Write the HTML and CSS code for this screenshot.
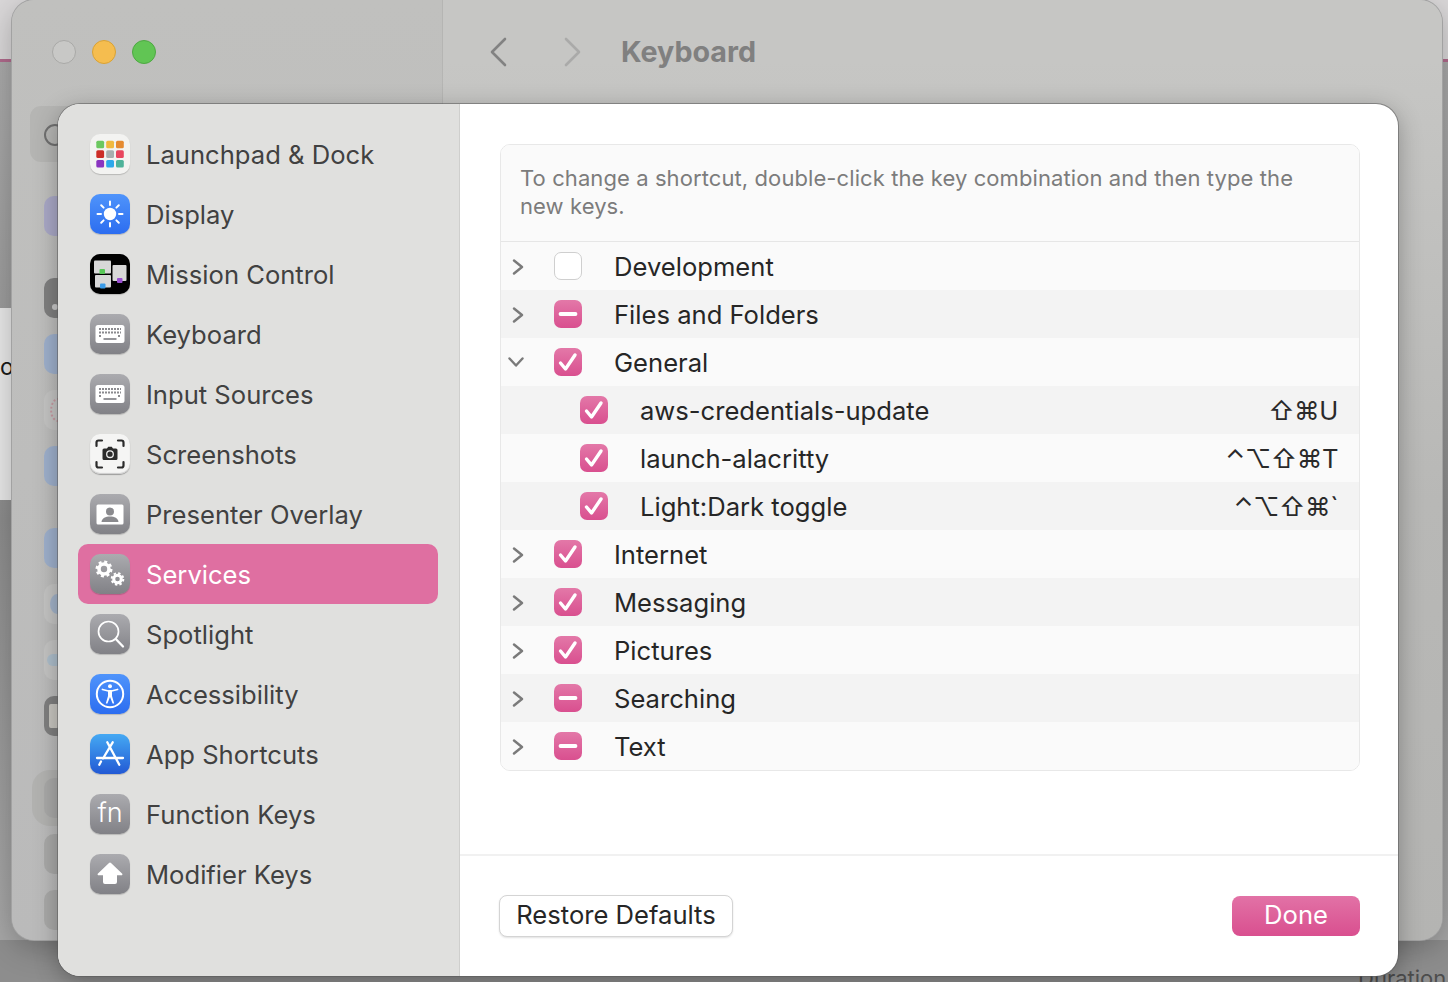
FILE: index.html
```html
<!DOCTYPE html>
<html lang="en">
<head>
<meta charset="utf-8">
<title>Keyboard</title>
<link rel="stylesheet" href="styles.css">
</head>
<body>
<div class="desktop">
  <div class="backdrop">
    <div class="bd-top"></div>
    <div class="bd-line"></div>
    <div class="bd-upper"></div>
    <div class="bd-panel"><span class="bd-letter">o</span></div>
    <div class="bd-lower"></div>
    <div class="bd-foot"><span class="bd-duration">Duration</span></div>
  </div>

  <div class="window">
    <aside class="win-side">
      <div class="lights">
        <span class="light light-off"></span>
        <span class="light light-min"></span>
        <span class="light light-max"></span>
      </div>
      <div class="search"><span class="search-ring"></span></div>
      <div class="ghost-group">
        <div class="ghost g-purple"></div>
      </div>
      <div class="ghost-group">
        <div class="ghost g-dark"><span class="g-dot"></span></div>
        <div class="ghost g-blue"></div>
        <div class="ghost g-white"><span class="g-print"></span></div>
        <div class="ghost g-blue"></div>
      </div>
      <div class="ghost-group">
        <div class="ghost g-blue"></div>
        <div class="ghost g-white"><span class="g-blob"></span></div>
        <div class="ghost g-white"><span class="g-cloud"></span></div>
        <div class="ghost g-dark"><span class="g-card"></span></div>
      </div>
      <div class="ghost-group">
        <div class="ghost g-grey g-selected"></div>
        <div class="ghost g-grey"></div>
        <div class="ghost g-grey"></div>
      </div>
    </aside>
    <div class="win-main">
      <div class="toolbar">
        <svg class="nav nav-back" viewBox="0 0 20 32"><path d="M17 3 4 16l13 13" /></svg>
        <svg class="nav nav-fwd" viewBox="0 0 20 32"><path d="M3 3l13 13L3 29" /></svg>
        <span class="win-title">Keyboard</span>
      </div>
    </div>
  </div>

  <div class="dialog">
    <nav class="nav-list">
      <div class="nav-row">
        <span class="tile t-white">
          <svg viewBox="0 0 40 40">
            <rect x="6.3" y="6.7" width="7.8" height="7.6" rx="1.5" fill="#6cc860"/>
            <rect x="16.2" y="6.7" width="7.8" height="7.6" rx="1.5" fill="#f0b93f"/>
            <rect x="26" y="6.7" width="7.8" height="7.6" rx="1.5" fill="#e58a30"/>
            <rect x="6.3" y="16.3" width="7.8" height="7.6" rx="1.5" fill="#cc2d26"/>
            <rect x="16.2" y="16.3" width="7.8" height="7.6" rx="1.5" fill="#a8aeae"/>
            <rect x="26" y="16.3" width="7.8" height="7.6" rx="1.5" fill="#e8465e"/>
            <rect x="6.3" y="26" width="7.8" height="7.6" rx="1.5" fill="#8a35c0"/>
            <rect x="16.2" y="26" width="7.8" height="7.6" rx="1.5" fill="#2da8ea"/>
            <rect x="26" y="26" width="7.8" height="7.6" rx="1.5" fill="#4fb39a"/>
          </svg>
        </span>
        <span class="nav-label">Launchpad &amp; Dock</span>
      </div>
      <div class="nav-row">
        <span class="tile t-blue">
          <svg viewBox="0 0 40 40">
            <circle cx="20" cy="20" r="6.2" fill="#fff"/>
            <g stroke="#fff" stroke-width="2" stroke-linecap="round">
              <path d="M20 7.5v3.5M20 29v3.5M7.5 20H11M29 20h3.5M11.2 11.2l2.4 2.4M26.4 26.4l2.4 2.4M28.8 11.2l-2.4 2.4M13.6 26.4l-2.4 2.4"/>
            </g>
          </svg>
        </span>
        <span class="nav-label">Display</span>
      </div>
      <div class="nav-row">
        <span class="tile t-black">
          <svg viewBox="0 0 40 40">
            <rect x="4" y="6.5" width="17" height="13" rx="1" fill="#d8d8d8"/>
            <rect x="5" y="21" width="16" height="12.5" rx="1" fill="#d8d8d8"/>
            <rect x="22.5" y="11" width="14" height="16" rx="1" fill="#d8d8d8"/>
            <rect x="9.5" y="15" width="5.5" height="5" rx="1" fill="#58c858"/>
            <rect x="10" y="29.5" width="5.5" height="5" rx="1" fill="#3a9be8"/>
            <rect x="27" y="24" width="5.5" height="5" rx="1" fill="#9a4fd0"/>
          </svg>
        </span>
        <span class="nav-label">Mission Control</span>
      </div>
      <div class="nav-row">
        <span class="tile t-grey">
          <svg viewBox="0 0 40 40">
            <rect x="5.5" y="11" width="29" height="18" rx="2.5" fill="#fff"/>
            <path class="keys" d="M9 15h22M9 18.5h22M9 22h3M28 22h3"/>
            <path class="space" d="M13.5 25h13"/>
          </svg>
        </span>
        <span class="nav-label">Keyboard</span>
      </div>
      <div class="nav-row">
        <span class="tile t-grey">
          <svg viewBox="0 0 40 40">
            <rect x="5.5" y="11" width="29" height="18" rx="2.5" fill="#fff"/>
            <path class="keys" d="M9 15h22M9 18.5h22M9 22h3M28 22h3"/>
            <path class="space" d="M13.5 25h13"/>
          </svg>
        </span>
        <span class="nav-label">Input Sources</span>
      </div>
      <div class="nav-row">
        <span class="tile t-shot">
          <svg viewBox="0 0 40 40">
            <path class="bracket" d="M6.5 12V8.5a2 2 0 0 1 2-2H12M28 6.5h3.5a2 2 0 0 1 2 2V12M33.5 28v3.5a2 2 0 0 1-2 2H28M12 33.5H8.5a2 2 0 0 1-2-2V28"/>
            <path d="M14 14.5h3l1.200-1.800h3.600l1.200 1.800h3a1.500 1.500 0 0 1 1.500 1.500v8.500a1.500 1.500 0 0 1-1.500 1.500H14a1.500 1.500 0 0 1-1.500-1.500V16a1.500 1.500 0 0 1 1.500-1.500z" fill="#2b2b2b"/>
            <circle cx="20" cy="20.2" r="3.3" fill="none" stroke="#eee" stroke-width="1.3"/>
          </svg>
        </span>
        <span class="nav-label">Screenshots</span>
      </div>
      <div class="nav-row">
        <span class="tile t-grey">
          <svg viewBox="0 0 40 40">
            <rect x="6.5" y="10.5" width="27" height="20" rx="1.5" fill="#fff"/>
            <circle cx="20" cy="17.5" r="4" fill="#8a8a8e"/>
            <path d="M11.5 28c.5-4 4-5.500 8.500-5.500s8 1.500 8.500 5.500z" fill="#8a8a8e"/>
          </svg>
        </span>
        <span class="nav-label">Presenter Overlay</span>
      </div>
      <div class="nav-row nav-selected">
        <span class="tile t-grey">
          <svg viewBox="0 0 40 40">
            <circle cx="14" cy="15" r="5" fill="none" stroke="#fff" stroke-width="3.6"/>
            <circle cx="14" cy="15" r="7.3" fill="none" stroke="#fff" stroke-width="2.4" stroke-dasharray="3 2.73"/>
            <circle cx="27.5" cy="25" r="3.8" fill="none" stroke="#fff" stroke-width="3"/>
            <circle cx="27.5" cy="25" r="5.8" fill="none" stroke="#fff" stroke-width="2" stroke-dasharray="2.4 2.15"/>
          </svg>
        </span>
        <span class="nav-label">Services</span>
      </div>
      <div class="nav-row">
        <span class="tile t-grey">
          <svg viewBox="0 0 40 40">
            <circle cx="18.5" cy="17.5" r="10" fill="none" stroke="#fff" stroke-width="1.7"/>
            <path d="M25.800 25l7.200 7.500" stroke="#fff" stroke-width="2.300" stroke-linecap="round"/>
          </svg>
        </span>
        <span class="nav-label">Spotlight</span>
      </div>
      <div class="nav-row">
        <span class="tile t-blue">
          <svg viewBox="0 0 40 40">
            <circle cx="20" cy="20" r="13.2" fill="none" stroke="#fff" stroke-width="2"/>
            <circle cx="20" cy="12.2" r="2" fill="#fff"/>
            <path d="M12.500 15.500 18.500 17h3l6-1.500" fill="none" stroke="#fff" stroke-width="1.800" stroke-linecap="round" stroke-linejoin="round"/>
            <path d="M18 16.500h4V22l2.200 7.500h-1.600L20 23l-2.600 6.500h-1.600L18 22z" fill="#fff"/>
          </svg>
        </span>
        <span class="nav-label">Accessibility</span>
      </div>
      <div class="nav-row">
        <span class="tile t-store">
          <svg viewBox="0 0 40 40">
            <path d="M17.300 8.300 29.300 30.700M22.700 8.300 13 24.500M11 27.500l-1.700 3.200M7 24h26" fill="none" stroke="#fff" stroke-width="2.300" stroke-linecap="round"/>
          </svg>
        </span>
        <span class="nav-label">App Shortcuts</span>
      </div>
      <div class="nav-row">
        <span class="tile t-grey t-fn">fn</span>
        <span class="nav-label">Function Keys</span>
      </div>
      <div class="nav-row">
        <span class="tile t-grey">
          <svg viewBox="0 0 40 40">
            <path d="M20 8.500a1.500 1.500 0 0 1 1 .5l11 10.500a1 1 0 0 1-.7 1.800H27V28a2 2 0 0 1-2 2H15a2 2 0 0 1-2-2v-6.700H8.700a1 1 0 0 1-.7-1.800L19 9a1.500 1.500 0 0 1 1-.5z" fill="#fff"/>
          </svg>
        </span>
        <span class="nav-label">Modifier Keys</span>
      </div>
    </nav>

    <main class="pane">
      <div class="pane-body">
        <section class="table">
          <p class="note">To change a shortcut, double-click the key combination and then type the new keys.</p>

          <div class="row row-light">
            <span class="chev-cell"><svg class="chev" viewBox="0 0 12 16"><path d="M2 1.500 10 8l-8 6.500"/></svg></span>
            <span class="cb cb-empty"></span>
            <span class="row-label">Development</span>
          </div>
          <div class="row row-dark">
            <span class="chev-cell"><svg class="chev" viewBox="0 0 12 16"><path d="M2 1.500 10 8l-8 6.500"/></svg></span>
            <span class="cb"><svg viewBox="0 0 28 28"><path class="dash" d="M6.500 14h15"/></svg></span>
            <span class="row-label">Files and Folders</span>
          </div>
          <div class="row row-light">
            <span class="chev-cell chev-open"><svg class="chev chev-down" viewBox="0 0 16 12"><path d="M1.500 2.500 8 9.500l6.500-7"/></svg></span>
            <span class="cb"><svg viewBox="0 0 28 28"><path class="tick" d="M6.500 15l5 6L21 7"/></svg></span>
            <span class="row-label">General</span>
          </div>
          <div class="row row-dark row-child">
            <span class="cb"><svg viewBox="0 0 28 28"><path class="tick" d="M6.500 15l5 6L21 7"/></svg></span>
            <span class="row-label">aws-credentials-update</span>
            <span class="keys-text">⇧⌘U</span>
          </div>
          <div class="row row-light row-child">
            <span class="cb"><svg viewBox="0 0 28 28"><path class="tick" d="M6.500 15l5 6L21 7"/></svg></span>
            <span class="row-label">launch-alacritty</span>
            <span class="keys-text">⌃⌥⇧⌘T</span>
          </div>
          <div class="row row-dark row-child">
            <span class="cb"><svg viewBox="0 0 28 28"><path class="tick" d="M6.500 15l5 6L21 7"/></svg></span>
            <span class="row-label">Light:Dark toggle</span>
            <span class="keys-text">⌃⌥⇧⌘`</span>
          </div>
          <div class="row row-light">
            <span class="chev-cell"><svg class="chev" viewBox="0 0 12 16"><path d="M2 1.500 10 8l-8 6.500"/></svg></span>
            <span class="cb"><svg viewBox="0 0 28 28"><path class="tick" d="M6.500 15l5 6L21 7"/></svg></span>
            <span class="row-label">Internet</span>
          </div>
          <div class="row row-dark">
            <span class="chev-cell"><svg class="chev" viewBox="0 0 12 16"><path d="M2 1.500 10 8l-8 6.500"/></svg></span>
            <span class="cb"><svg viewBox="0 0 28 28"><path class="tick" d="M6.500 15l5 6L21 7"/></svg></span>
            <span class="row-label">Messaging</span>
          </div>
          <div class="row row-light">
            <span class="chev-cell"><svg class="chev" viewBox="0 0 12 16"><path d="M2 1.500 10 8l-8 6.500"/></svg></span>
            <span class="cb"><svg viewBox="0 0 28 28"><path class="tick" d="M6.500 15l5 6L21 7"/></svg></span>
            <span class="row-label">Pictures</span>
          </div>
          <div class="row row-dark">
            <span class="chev-cell"><svg class="chev" viewBox="0 0 12 16"><path d="M2 1.500 10 8l-8 6.500"/></svg></span>
            <span class="cb"><svg viewBox="0 0 28 28"><path class="dash" d="M6.500 14h15"/></svg></span>
            <span class="row-label">Searching</span>
          </div>
          <div class="row row-light">
            <span class="chev-cell"><svg class="chev" viewBox="0 0 12 16"><path d="M2 1.500 10 8l-8 6.500"/></svg></span>
            <span class="cb"><svg viewBox="0 0 28 28"><path class="dash" d="M6.500 14h15"/></svg></span>
            <span class="row-label">Text</span>
          </div>
        </section>
      </div>
      <footer class="pane-foot">
        <button class="btn btn-plain">Restore Defaults</button>
        <button class="btn btn-done">Done</button>
      </footer>
    </main>
  </div>
</div>
</body>
</html>
```

FILE: styles.css
```css
* { box-sizing: border-box; }

html, body {
  margin: 0;
  padding: 0;
  background: #8f8f8f;
}

body {
  font-family: Inter, "Noto Sans", "DejaVu Sans", sans-serif;
}

.desktop {
  position: relative;
  width: 1448px;
  height: 982px;
  overflow: hidden;
}

/* What lies behind the settings window */
.backdrop {
  display: flex;
  flex-direction: column;
  height: 982px;
  background: linear-gradient(180deg, #a9a9a9 60px, #9c9c9c 300px, #8c8c8c 520px, #a6a6a6 930px);
}

.backdrop > div {
  flex: none;
}

.bd-top {
  height: 59px;
  background: #d9d7d8;
}

.bd-line {
  height: 3px;
  background: #b06a8c;
}

.bd-upper {
  height: 246px;
}

.bd-panel {
  height: 192px;
  width: 220px;
  padding-top: 44px;
  background: #e8e8e8;
  overflow: hidden;
}

.bd-letter {
  display: block;
  font-size: 23px;
  line-height: 30px;
  color: #1a1a1a;
}

.bd-lower {
  height: 440px;
}

.bd-foot {
  height: 42px;
  padding: 24px 0 0 1358px;
  background: #8d8d8d;
  white-space: nowrap;
}

.bd-duration {
  display: block;
  font-size: 22px;
  line-height: 28px;
  color: #4d4d4d;
}

/* Settings window, dimmed */
.window {
  position: absolute;
  left: 12px;
  top: 0;
  width: 1430px;
  height: 940px;
  display: flex;
  border-radius: 22px;
  overflow: hidden;
  background: #bababa;
  box-shadow: 0 0 0 1px #a2a2a2, 0 8px 30px rgba(0, 0, 0, .25);
}

.win-side {
  width: 431px;
  flex: none;
  padding: 40px 0 0 32px;
  background: linear-gradient(180deg, #c0c0be, #bababa);
  border-right: 1px solid #b5b5b3;
}

.lights {
  display: flex;
  gap: 16px;
  margin-left: 8px;
  height: 24px;
}

.light {
  width: 24px;
  height: 24px;
  border-radius: 50%;
  border: 1px solid;
}

.light-off { background: #c8c8c6; border-color: #a9a9a7; }
.light-min { background: #f5bd4f; border-color: #d9a235; }
.light-max { background: #61c554; border-color: #4ea843; }

.search {
  margin: 42px 0 34px -14px;
  width: 200px;
  height: 56px;
  padding: 18px 0 0 14px;
  border-radius: 11px;
  background: #b5b5b3;
}

.search-ring {
  display: block;
  width: 22px;
  height: 22px;
  border-radius: 50%;
  border: 2px solid #707070;
}

.ghost-group {
  display: flex;
  flex-direction: column;
  gap: 16px;
  margin-bottom: 42px;
}

.ghost {
  position: relative;
  width: 40px;
  height: 40px;
  border-radius: 10px;
}

.g-purple { background: #a9a8c6; }
.g-dark { background: #7f7f7f; }
.g-blue { background: #9eb0cc; }
.g-white { background: #c4c4c3; }
.g-grey { background: #a9a9a8; }

.g-selected {
  box-shadow: -4px 0 0 8px #b2b2b0;
}

.g-dot {
  position: absolute;
  left: 8px;
  top: 26px;
  width: 6px;
  height: 6px;
  border-radius: 50%;
  background: #c8c8c8;
}

.g-print {
  position: absolute;
  left: 6px;
  top: 8px;
  width: 16px;
  height: 24px;
  border-radius: 50%;
  border: 2px dotted #c79aa2;
}

.g-blob {
  position: absolute;
  left: 6px;
  top: 10px;
  width: 14px;
  height: 20px;
  border-radius: 50%;
  background: #a3b3c9;
}

.g-cloud {
  position: absolute;
  left: 3px;
  top: 14px;
  width: 16px;
  height: 12px;
  border-radius: 6px;
  background: #adbecb;
}

.g-card {
  position: absolute;
  left: 5px;
  top: 8px;
  width: 10px;
  height: 24px;
  border-radius: 2px;
  background: #c8c6c0;
}

.win-main {
  flex: 1;
  background: linear-gradient(180deg, #c6c6c4 60px, #b8b8b6 500px, #b4b4b2);
}

.toolbar {
  display: flex;
  align-items: center;
  height: 104px;
  padding-left: 45px;
}

.nav {
  width: 20px;
  height: 32px;
  fill: none;
  stroke-width: 2.6;
  stroke-linecap: round;
  stroke-linejoin: round;
}

.nav-back { stroke: #828282; }
.nav-fwd { stroke: #aaaaa9; margin-left: 55px; }

.win-title {
  margin-left: 38px;
  font-size: 28.7px;
  line-height: 36px;
  font-weight: 700;
  color: #808080;
}

/* Sheet */
.dialog {
  position: absolute;
  left: 58px;
  top: 104px;
  width: 1340px;
  height: 872px;
  display: flex;
  border-radius: 22px;
  overflow: hidden;
  background: #fff;
  box-shadow: 0 0 0 1px rgba(90, 90, 90, .55), 0 6px 24px rgba(0, 0, 0, .3);
}

.nav-list {
  width: 402px;
  flex: none;
  padding: 20px 21px 0 20px;
  background: #e0e0de;
  border-right: 1px solid #cfcfcd;
}

.nav-row {
  display: flex;
  align-items: center;
  gap: 16px;
  height: 60px;
  padding-left: 12px;
  border-radius: 10px;
}

.nav-selected {
  background: #df6fa1;
}

.nav-selected .nav-label {
  color: #fff;
}

.nav-label {
  padding-top: 2px;
  font-size: 25.6px;
  line-height: 32px;
  color: #414141;
  white-space: nowrap;
}

.tile {
  width: 40px;
  height: 40px;
  flex: none;
  display: block;
  border-radius: 10px;
  box-shadow: 0 1px 1px rgba(0, 0, 0, .18);
}

.tile svg {
  display: block;
  width: 40px;
  height: 40px;
}

.t-white { background: #f3f3f1; }
.t-blue { background: linear-gradient(180deg, #4f94fb, #2c6df0); }
.t-black { background: #000; }
.t-grey { background: linear-gradient(180deg, #ababaf, #818186); }
.t-shot { background: #f5f5f4; box-shadow: 0 1px 1px rgba(0, 0, 0, .3), inset 0 -1px 1px #ccc; }
.t-store { background: linear-gradient(180deg, #45a9f3, #2259d4); }

.t-fn {
  color: #fff;
  font-size: 27px;
  font-weight: 300;
  line-height: 37px;
  text-align: center;
}

.keys {
  fill: none;
  stroke: #8b8b8f;
  stroke-width: 2;
  stroke-dasharray: 2 1;
}

.space {
  fill: none;
  stroke: #8b8b8f;
  stroke-width: 1.8;
}

.bracket {
  fill: none;
  stroke: #2b2b2b;
  stroke-width: 2.2;
  stroke-linecap: round;
}

/* Main pane */
.pane {
  flex: 1;
  display: flex;
  flex-direction: column;
  min-width: 0;
}

.pane-body {
  flex: 1;
  padding: 40px 38px 0 40px;
}

.table {
  border: 1px solid #e8e8e8;
  border-radius: 10px;
  overflow: hidden;
}

.note {
  margin: 0;
  height: 97px;
  padding: 19px 40px 0 19px;
  font-size: 22px;
  line-height: 28px;
  letter-spacing: .09px;
  color: #7c7c7c;
  background: #fafafa;
  border-bottom: 1px solid #e6e6e6;
}

.row {
  display: flex;
  align-items: center;
  height: 48px;
  padding-right: 21px;
}

.row-light { background: #fafafa; }
.row-dark { background: #f3f3f3; }

.row-child {
  padding-left: 79px;
}

.chev-cell {
  width: 53px;
  flex: none;
  padding: 2px 0 0 11px;
}

.chev-open {
  padding: 0 0 0 7px;
}

.chev {
  display: block;
  width: 12px;
  height: 16px;
  fill: none;
  stroke: #7a7a7a;
  stroke-width: 2.4;
  stroke-linecap: round;
  stroke-linejoin: round;
}

.chev-down {
  width: 16px;
  height: 12px;
}

.cb {
  width: 28px;
  height: 28px;
  flex: none;
  display: block;
  border-radius: 7px;
  background: linear-gradient(180deg, #e378a8, #d94f8f);
}

.cb svg {
  display: block;
  width: 28px;
  height: 28px;
  fill: none;
  stroke: #fff;
  stroke-linecap: round;
  stroke-linejoin: round;
}

.cb-empty {
  background: #fff;
  border: 1px solid #cfcfcf;
}

.tick { stroke-width: 3.4; }
.dash { stroke-width: 3.8; }

.row-label {
  margin-left: 32px;
  padding-top: 2px;
  font-size: 25.6px;
  line-height: 32px;
  color: #262626;
  white-space: nowrap;
}

.keys-text {
  margin-left: auto;
  padding-top: 2px;
  font-family: Inter, "Noto Sans CJK JP", "DejaVu Sans", sans-serif;
  font-size: 25.6px;
  line-height: 32px;
  letter-spacing: -.4px;
  color: #2a2a2a;
  white-space: nowrap;
}

.pane-foot {
  display: flex;
  align-items: center;
  justify-content: space-between;
  height: 122px;
  padding: 0 38px 0 39px;
  border-top: 2px solid #f1f1f1;
}

.btn {
  font-family: inherit;
  font-size: 25.6px;
  border-radius: 8px;
  padding: 0 0 3px;
}

.btn-plain {
  width: 234px;
  height: 42px;
  background: #fff;
  color: #262626;
  border: 1px solid #d4d4d4;
  box-shadow: 0 1px 2px rgba(0, 0, 0, .12);
}

.btn-done {
  width: 128px;
  height: 40px;
  color: #fff;
  border: 0;
  background: linear-gradient(180deg, #e272a6, #d94f8f);
}
```
